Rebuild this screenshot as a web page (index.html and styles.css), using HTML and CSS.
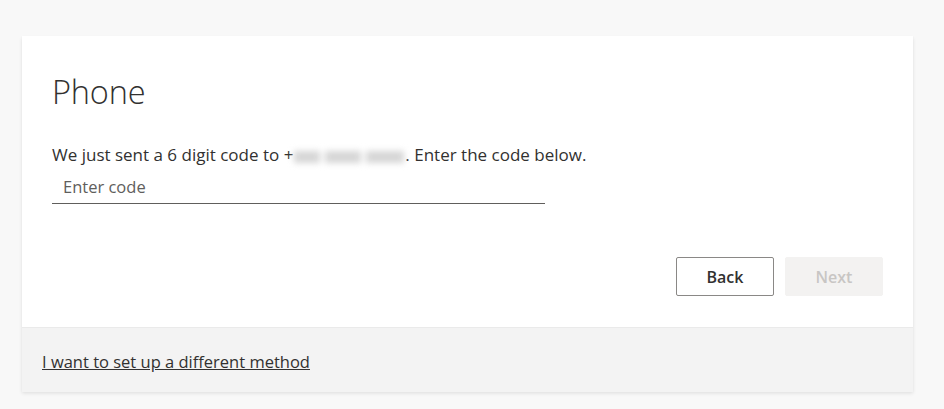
FILE: index.html
```html
<!DOCTYPE html>
<html lang="en">
<head>
<meta charset="utf-8">
<title>Phone</title>
<link rel="stylesheet" href="styles.css">
</head>
<body>
<main class="card">
  <section class="card-body">
    <h1 class="title">Phone</h1>
    <p class="message">We just sent a 6 digit code to +<span class="masked" aria-hidden="true"><span class="blob b1"></span><span class="blob b2"></span><span class="blob b3"></span></span>. Enter the code below.</p>
    <div class="field">
      <input class="code-input" type="text" placeholder="Enter code">
    </div>
    <div class="actions">
      <button class="btn btn-back" type="button">Back</button>
      <button class="btn btn-next" type="button" disabled>Next</button>
    </div>
  </section>
  <footer class="card-footer">
    <a class="alt-link" href="#">I want to set up a different method</a>
  </footer>
</main>
</body>
</html>
```
FILE: styles.css
```css
html, body {
  margin: 0;
  padding: 0;
}
body {
  background: #f8f8f8;
  font-family: "Open Sans", "Noto Sans", sans-serif;
  color: #323130;
  padding: 36px 31px 17px 22px;
}
.card {
  background: #ffffff;
  box-shadow: 0 1.6px 3.6px rgba(0,0,0,0.10), 0 0.3px 0.9px rgba(0,0,0,0.08);
  width: 891px;
  height: 356px;
  display: flex;
  flex-direction: column;
}
.card-body {
  padding: 36px 30px 31px 30px;
  box-sizing: border-box;
  height: 291px;
  display: flex;
  flex-direction: column;
}
.title {
  margin: 0;
  font-weight: 300;
  font-size: 32.5px;
  line-height: 40px;
  color: #323130;
  letter-spacing: -0.2px;
}
.message {
  margin: 31px 0 0 0;
  font-size: 17px;
  line-height: 24px;
  color: #323130;
}
.masked {
  display: inline-flex;
  align-items: center;
  gap: 5px;
  height: 16px;
  width: 110px;
  vertical-align: -2px;
  filter: blur(3px);
  margin: 0 1px 0 1px;
}
.blob {
  display: inline-block;
  height: 12px;
  background: #d6d6d6;
}
.b1 { width: 26px; }
.b2 { width: 36px; }
.b3 { width: 38px; }
.field {
  margin-top: 0;
  width: 493px;
  border-bottom: 1px solid #605e5c;
}
.code-input {
  display: block;
  width: 100%;
  box-sizing: border-box;
  border: none;
  outline: none;
  background: transparent;
  font-family: inherit;
  font-size: 16.5px;
  line-height: 22px;
  height: 36px;
  padding: 8px 10px 6px 11px;
  color: #323130;
}
.code-input::placeholder {
  color: #605e5c;
}
.actions {
  margin-top: auto;
  display: flex;
  justify-content: flex-end;
  gap: 11px;
}
.btn {
  width: 98px;
  height: 39px;
  box-sizing: border-box;
  font-family: inherit;
  font-size: 16px;
  font-weight: 600;
  border-radius: 2px;
  padding: 0;
}
.btn-back {
  background: #ffffff;
  border: 1px solid #8a8886;
  color: #323130;
}
.btn-next {
  background: #f3f2f1;
  border: 1px solid #f3f2f1;
  color: #c8c6c4;
}
.card-footer {
  flex: 1;
  background: #f3f3f3;
  border-top: 1px solid #eaeaea;
  display: flex;
  align-items: center;
  padding: 0 20px;
}
.alt-link {
  color: #323130;
  font-size: 16.5px;
  text-decoration: underline;
  margin-top: 3px;
}
```
